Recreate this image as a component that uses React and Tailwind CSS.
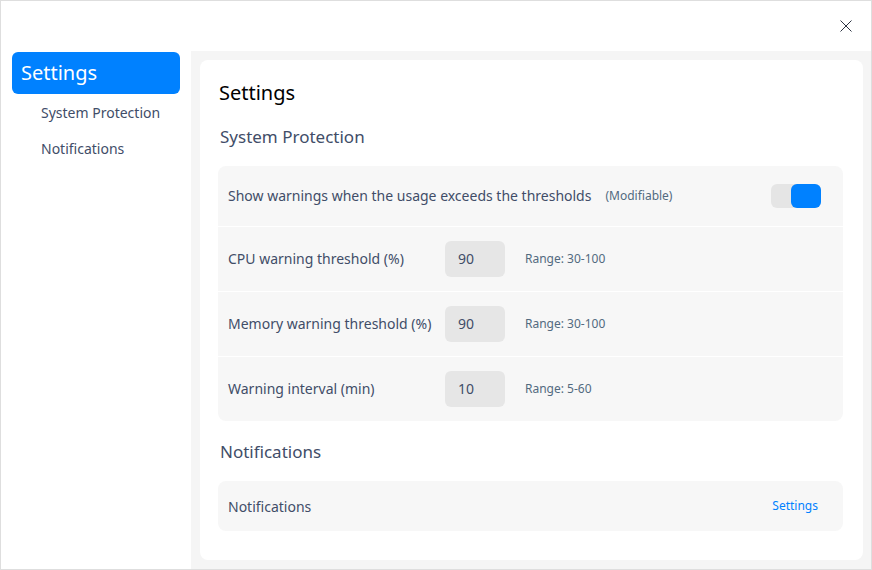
const rows = [
  { label: "CPU warning threshold (%)", value: "90", range: "Range: 30-100" },
  { label: "Memory warning threshold (%)", value: "90", range: "Range: 30-100" },
  { label: "Warning interval (min)", value: "10", range: "Range: 5-60" },
]

const Toggle = () => (
  <div className="flex h-6 w-[50px] justify-end rounded-md bg-[#e5e5e5]">
    <div className="h-6 w-[30px] rounded-md bg-[#0081ff]"></div>
  </div>
)

export default function App() {
  return (
    <div
      className="flex h-[570px] w-[872px] flex-col border border-[#dedede] bg-white text-[#414d68]"
      style={{ fontFamily: '"Noto Sans", sans-serif' }}
    >
      <div className="flex h-[50px] shrink-0 items-start justify-end pr-[19px] pt-[19px]">
        <svg width="12" height="12" viewBox="0 0 12 12" className="text-[#2d3443]">
          <path d="M0.5 0.5L11.5 11.5M11.5 0.5L0.5 11.5" stroke="currentColor" strokeWidth="1" />
        </svg>
      </div>

      <div className="flex min-h-0 flex-1">
        <div className="w-[190px] shrink-0 bg-white px-[11px] pt-px">
          <div className="flex h-[42px] items-center rounded-md bg-[#0081ff] pl-[9px] text-[20px] text-white">
            Settings
          </div>
          <div className="flex h-[36px] items-center pl-[29px] text-[14px]">System Protection</div>
          <div className="flex h-[36px] items-center pl-[29px] text-[14px]">Notifications</div>
        </div>

        <div className="flex-1 bg-[#f5f5f5] pb-[9px] pl-[9px] pr-2 pt-[9px]">
          <div className="h-full rounded-lg bg-white pl-[18px] pr-[20px] pt-[19px]">
            <h1 className="h-[28px] pl-px text-[20px] leading-[28px] text-black">Settings</h1>

            <h2 className="mt-[18px] h-6 pl-[2px] text-[17px] leading-6">System Protection</h2>

            <div className="mt-[17px] overflow-hidden rounded-lg bg-[#f7f7f7] text-[14px]">
              <div className="flex h-[60px] items-center pb-px pl-[10px] pr-[22px]">
                <span>Show warnings when the usage exceeds the thresholds</span>
                <span className="ml-[14px] text-[12px] text-[#526a7f]">(Modifiable)</span>
                <div className="ml-auto pt-px">
                  <Toggle />
                </div>
              </div>
              {rows.map((row) => (
                <div key={row.label} className="flex h-[65px] items-center border-t border-white pb-px pl-[10px]">
                  <span className="w-[217px]">{row.label}</span>
                  <div className="flex h-9 w-[60px] items-center rounded-md bg-[#e6e6e6] pl-[13px]">
                    {row.value}
                  </div>
                  <span className="ml-5 text-[12px] text-[#526a7f]">{row.range}</span>
                </div>
              ))}
            </div>

            <h2 className="mt-[19px] h-6 pl-[2px] text-[17px] leading-6">Notifications</h2>

            <div className="mt-[17px] flex h-[50px] items-center justify-between rounded-lg bg-[#f7f7f7] pl-[10px] pr-[25px] text-[14px]">
              <span>Notifications</span>
              <span className="text-[12px] text-[#0081ff]">Settings</span>
            </div>
          </div>
        </div>
      </div>
    </div>
  )
}
